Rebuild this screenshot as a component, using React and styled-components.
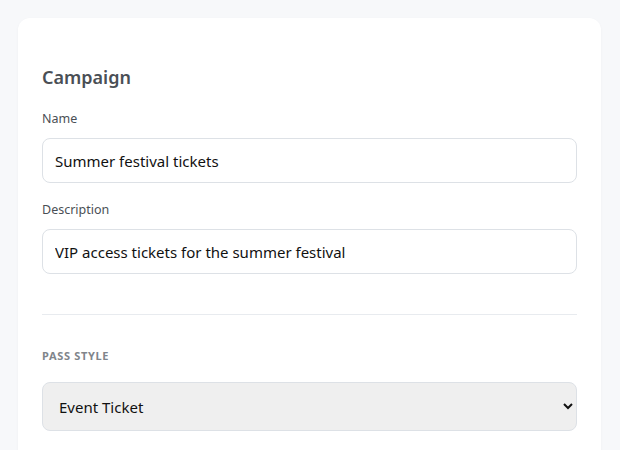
import styled, { createGlobalStyle } from 'styled-components';

const GlobalStyle = createGlobalStyle`
    html, body {
        margin: 0;
        background: #f7f8fa;
        font-family: "Noto Sans", "Open Sans", sans-serif;
        color: #1f2328;
        overflow: hidden;
    }
`;

const Page = styled.div`
    padding: 18px 19px 0 18px;
`;

const Card = styled.div`
    background: #ffffff;
    border-radius: 12px;
    padding: 48px 24px 48px 24px;
    box-shadow: 0 1px 3px rgba(0, 0, 0, 0.04);
`;

const Heading = styled.h2`
    margin: 0 0 22px 0;
    font-size: 18px;
    font-weight: 600;
    color: #4a4f55;
    line-height: 22px;
`;

const Field = styled.div`
    display: flex;
    flex-direction: column;
    gap: 10px;
    margin-bottom: 18px;
`;

const Label = styled.label`
    font-size: 12.5px;
    color: #4a4f55;
    line-height: 18px;
`;

const Input = styled.input`
    box-sizing: border-box;
    height: 45px;
    padding: 0 12px;
    border: 1px solid #dde1e6;
    border-radius: 8px;
    font-family: inherit;
    font-size: 15px;
    color: #111;
    background: #fff;
    outline: none;
`;

const Divider = styled.hr`
    border: none;
    border-top: 1px solid #e8ebef;
    margin: 40px 0 34px 0;
`;

const SectionTitle = styled.div`
    font-size: 11px;
    font-weight: 700;
    letter-spacing: 0.06em;
    text-transform: uppercase;
    color: #80858b;
    line-height: 14px;
    margin-bottom: 19px;
`;

const Select = styled.select`
    box-sizing: border-box;
    width: 100%;
    height: 49px;
    padding: 0 12px;
    border: 1px solid #dde1e6;
    border-radius: 8px;
    background: #efefef;
    font-family: inherit;
    font-size: 15px;
    color: #111;
`;

function App() {
    return (
        <>
            <GlobalStyle />
            <Page>
                <Card>
                    <Heading>Campaign</Heading>
                    <Field>
                        <Label>Name</Label>
                        <Input defaultValue="Summer festival tickets" />
                    </Field>
                    <Field>
                        <Label>Description</Label>
                        <Input defaultValue="VIP access tickets for the summer festival" />
                    </Field>
                    <Divider />
                    <SectionTitle>Pass style</SectionTitle>
                    <Select defaultValue="event">
                        <option value="event">Event Ticket</option>
                        <option value="boarding">Boarding Pass</option>
                        <option value="coupon">Coupon</option>
                    </Select>
                </Card>
            </Page>
        </>
    );
}

export default App;
